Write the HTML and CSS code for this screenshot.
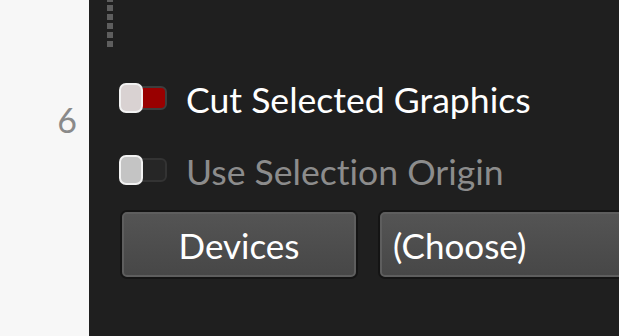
FILE: index.html
```html
<!DOCTYPE html>
<html>
<head>
<meta charset="utf-8">
<link rel="stylesheet" href="styles.css">
</head>
<body>
<div class="gutter"><span class="lineno">6</span></div>
<div class="panel">
  <div class="dots"></div>
  <div class="opts">
    <div class="row">
      <span class="toggle on"><span class="track"></span><span class="knob"></span></span>
      <span class="label">Cut Selected Graphics</span>
    </div>
    <div class="row">
      <span class="toggle off"><span class="track"></span><span class="knob"></span></span>
      <span class="label dim">Use Selection Origin</span>
    </div>
  </div>
  <div class="buttons">
    <div class="btn center">Devices</div>
    <div class="btn wide">(Choose)</div>
  </div>
</div>
</body>
</html>
```
FILE: styles.css
```css
html, body { margin: 0; padding: 0; }
body {
  width: 619px; height: 336px; overflow: hidden;
  display: flex;
  font-family: Lato, "Liberation Sans", sans-serif;
  font-variant-ligatures: none;
}
.gutter {
  width: 89px; flex: none;
  background: #f7f7f7;
  display: flex; justify-content: flex-end;
  padding-right: 12px; box-sizing: border-box;
  padding-top: 100px;
}
.lineno { font-size: 34px; line-height: 40px; height: 40px; color: #8a8a8a; }
.panel {
  flex: 1;
  background: #1f1f1f;
  display: flex; flex-direction: column;
  padding-left: 18px;
  overflow: hidden;
}
.dots {
  width: 6px; height: 47px;
  background-image: linear-gradient(to bottom, #5e5e5e 0, #5e5e5e 6px, transparent 6px, transparent 9px);
  background-size: 6px 9px;
  background-position: 0 5px;
}
.opts {
  margin-left: 12px;
  padding-top: 36px;
  display: flex; flex-direction: column; gap: 42px;
}
.row { display: flex; align-items: center; height: 30px; }
.toggle { position: relative; width: 48px; height: 30px; flex: none; }
.track {
  position: absolute; left: 9px; top: 3px;
  width: 39px; height: 24px; box-sizing: border-box;
  border-radius: 6px; border: 2px solid #3a3a3a;
}
.on .track { background: #990000; border-color: #3d3d3d; }
.off .track { background: #262626; border-color: #333; }
.knob {
  position: absolute; left: 0; top: 0;
  width: 24px; height: 30px; box-sizing: border-box;
  border-radius: 7px; border: 2px solid #f2f2f2;
}
.on .knob { background: #d9d2d2; }
.off .knob { background: #c4c4c4; }
.label { margin-left: 19px; padding-top: 4px; font-size: 35.6px; line-height: 40px; color: #ffffff; white-space: nowrap; }
.label.dim { color: #8c8c8c; }
.buttons {
  margin-top: 27px; margin-left: 15px;
  display: flex; gap: 24px;
}
.btn {
  flex: none;
  height: 65px; box-sizing: border-box;
  border: 2px solid #5e5e5e; border-radius: 5px;
  box-shadow: 0 0 0 2px #141414;
  background: linear-gradient(#545454, #474747);
  color: #fff; font-size: 35px;
  display: flex; align-items: center;
  white-space: nowrap;
}
.btn.center { width: 234px; justify-content: center; }
.btn.wide { width: 300px; padding-left: 11px; }
```
